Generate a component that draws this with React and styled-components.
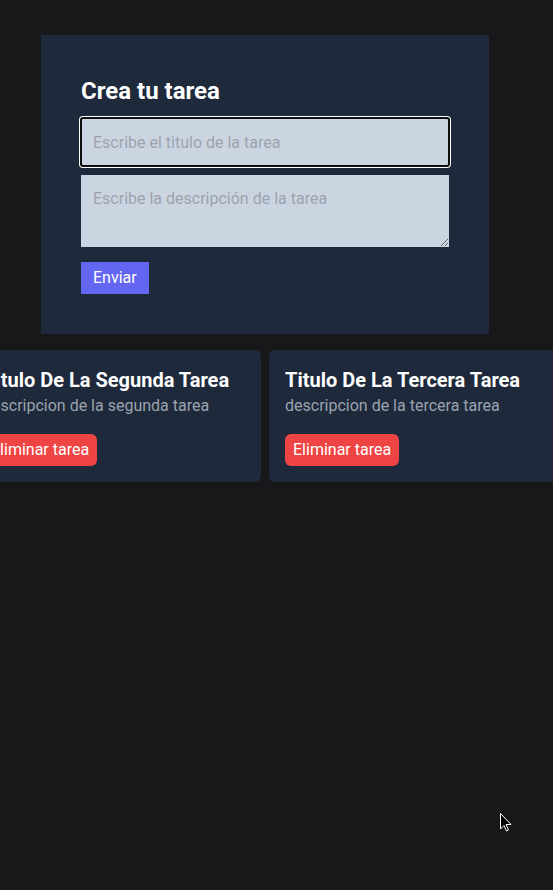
import React from 'react'
import styled, { createGlobalStyle } from 'styled-components'

const GlobalStyle = createGlobalStyle`
  * { box-sizing: border-box; }
  html, body {
    margin: 0;
    padding: 0;
    background: #18181b;
    font-family: Roboto, "Noto Sans", sans-serif;
    overflow: hidden;
  }
`

const Page = styled.main`
  width: 530px;
  min-height: 890px;
  padding-top: 35px;
  display: flex;
  flex-direction: column;
  align-items: center;
`

const FormCard = styled.form`
  width: 448px;
  background: #1e293b;
  padding: 40px;
  display: flex;
  flex-direction: column;
  align-items: flex-start;
`

const Heading = styled.h1`
  margin: 0 0 11px;
  font-family: Roboto, sans-serif;
  font-size: 24px;
  line-height: 32px;
  font-weight: 700;
  color: #fff;
`

const Field = styled.input`
  width: 100%;
  height: 48px;
  padding: 12px;
  border: none;
  background: #cbd5e1;
  font-family: Roboto, sans-serif;
  font-size: 16px;
  line-height: 24px;
  color: #1e293b;
  border-radius: 2px;
  outline: 2px solid #101010;
  outline-offset: -1px;
  box-shadow: 0 0 0 2px #fff;
  margin-bottom: 9px;
  &::placeholder { color: #9ca3af; }
`

const Area = styled.textarea`
  width: 100%;
  height: 72px;
  padding: 12px;
  border: none;
  background: #cbd5e1;
  font-family: Roboto, sans-serif;
  font-size: 16px;
  line-height: 24px;
  color: #1e293b;
  resize: vertical;
  display: block;
  margin-bottom: 15px;
  &::placeholder { color: #9ca3af; }
`

const SendButton = styled.button`
  background: #6366f1;
  color: #fff;
  border: none;
  padding: 4px 12px;
  font-family: Roboto, sans-serif;
  font-size: 16px;
  line-height: 24px;
`

const CardRow = styled.section`
  width: 100%;
  margin-top: 16px;
  display: flex;
  justify-content: center;
  gap: 8px;
`

const TaskCard = styled.article`
  flex: 0 0 294px;
  background: #1e293b;
  border-radius: 6px;
  padding: 16px;
`

const TaskTitle = styled.h2`
  margin: 0;
  font-size: 20px;
  line-height: 28px;
  font-weight: 700;
  color: #fff;
  white-space: nowrap;
`

const TaskText = styled.p`
  margin: 0;
  font-size: 16px;
  line-height: 24px;
  color: #9ca3af;
  white-space: nowrap;
`

const DeleteButton = styled.button`
  margin-top: 16px;
  background: #ef4444;
  color: #fff;
  border: none;
  border-radius: 6px;
  padding: 4px 8px;
  font-family: Roboto, sans-serif;
  font-size: 16px;
  line-height: 24px;
`

const Pointer = styled.svg`
  position: fixed;
  left: 500px;
  top: 813px;
`

const tasks = [
  { id: 1, title: 'Titulo De La Primera Tarea', description: 'descripcion de la primera tarea' },
  { id: 2, title: 'Titulo De La Segunda Tarea', description: 'descripcion de la segunda tarea' },
  { id: 3, title: 'Titulo De La Tercera Tarea', description: 'descripcion de la tercera tarea' },
  { id: 4, title: 'Titulo De La Cuarta Tarea', description: 'descripcion de la cuarta tarea' },
]

const App = () => {
  return (
    <>
      <GlobalStyle />
      <Page>
        <FormCard onSubmit={(e) => e.preventDefault()}>
          <Heading>Crea tu tarea</Heading>
          <Field placeholder="Escribe el titulo de la tarea" />
          <Area placeholder="Escribe la descripción de la tarea" />
          <SendButton>Enviar</SendButton>
        </FormCard>
        <CardRow>
          {tasks.map((task) => (
            <TaskCard key={task.id}>
              <TaskTitle>{task.title}</TaskTitle>
              <TaskText>{task.description}</TaskText>
              <DeleteButton>Eliminar tarea</DeleteButton>
            </TaskCard>
          ))}
        </CardRow>
      </Page>
      <Pointer width="12" height="19" viewBox="0 0 12 19">
        <path d="M0.5 0.5 L0.5 16 L4 12.5 L6.5 18 L8.5 17 L6 11.5 L11 11.5 Z" fill="#000" stroke="#fff" strokeWidth="1" />
      </Pointer>
    </>
  )
}

export default App
